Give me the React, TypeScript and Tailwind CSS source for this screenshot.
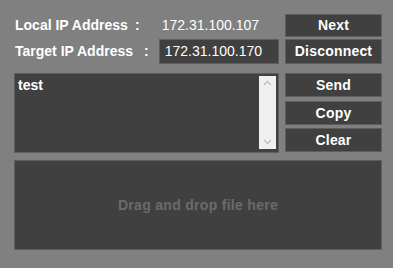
import React from "react";

const font = { fontFamily: '"Liberation Sans", Arial, sans-serif' };

function Btn({ label, h }: { label: string; h: string }) {
  return (
    <div
      className={`flex w-[97px] ${h} items-center justify-center border border-[#5e5e5e] bg-[#404040] text-[14px] font-bold tracking-[0.2px] text-white`}
    >
      {label}
    </div>
  );
}

export default function App() {
  return (
    <div
      className="flex h-[268px] w-[393px] flex-col bg-[#808080] pl-[14px] pt-[14px]"
      style={font}
    >
      {/* Top row */}
      <div className="flex gap-[6px]">
        <div className="flex w-[265px] flex-col gap-[2px]">
          <div className="flex h-[23px] items-center text-white">
            <span className="ml-[1px] w-[114px] whitespace-nowrap text-[14px] font-bold">Local IP Address</span>
            <span className="ml-[6px] text-[14px] font-bold">:</span>
            <span className="ml-[22px] text-[14px]">172.31.100.107</span>
          </div>
          <div className="flex h-[25px] items-center text-white">
            <span className="ml-[1px] w-[120px] whitespace-nowrap text-[14px] font-bold">Target IP Address</span>
            <span className="ml-[9px] text-[14px] font-bold">:</span>
            <div className="ml-[10px] flex h-[25px] w-[120px] items-center border border-[#5e5e5e] bg-[#404040] pl-[5px] text-[14px]">
              172.31.100.170
            </div>
          </div>
        </div>
        <div className="flex flex-col gap-[2px]">
          <Btn label="Next" h="h-[23px]" />
          <Btn label="Disconnect" h="h-[25px]" />
        </div>
      </div>

      {/* Middle row */}
      <div className="mt-[9px] flex gap-[6px]">
        <div className="flex h-[80px] w-[265px] border border-[#5e5e5e] bg-[#404040] pt-[2px] pb-[3px] pl-[2px] pr-[2px]">
          <div className="flex-1 pl-[1px] text-[14px] font-bold leading-[18px] text-white">test</div>
          <div className="flex w-[17px] flex-col items-center justify-between bg-[#f0f0f0] py-[4px]">
            <svg width="9" height="6" viewBox="0 0 9 6">
              <path d="M1 5 L4.5 1.5 L8 5" fill="none" stroke="#c2c2c2" strokeWidth="1.6" />
            </svg>
            <svg width="9" height="6" viewBox="0 0 9 6">
              <path d="M1 1 L4.5 4.5 L8 1" fill="none" stroke="#c2c2c2" strokeWidth="1.6" />
            </svg>
          </div>
        </div>
        <div className="flex flex-col">
          <Btn label="Send" h="h-[24px]" />
          <div className="mt-[4px]">
            <Btn label="Copy" h="h-[24px]" />
          </div>
          <div className="mt-[3px]">
            <Btn label="Clear" h="h-[24px]" />
          </div>
        </div>
      </div>

      {/* Drop area */}
      <div className="mt-[7px] flex h-[90px] w-[368px] items-center justify-center border border-[#5e5e5e] bg-[#404040] text-[14px] font-bold tracking-[0.3px] text-[#6b6b6b]">
        Drag and drop file here
      </div>
    </div>
  );
}
